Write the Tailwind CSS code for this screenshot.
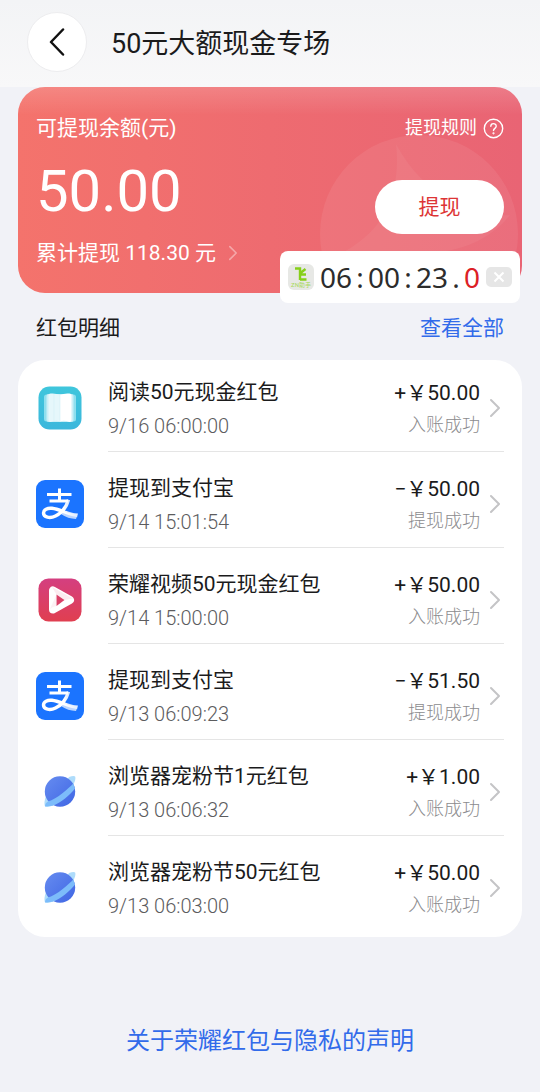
<!DOCTYPE html>
<html lang="zh-CN">
<head>
<meta charset="utf-8">
<meta name="viewport" content="width=device-width, initial-scale=1">
<title>50元大额现金专场</title>
<script src="https://cdn.jsdelivr.net/npm/@tailwindcss/browser@4"></script>
</head>
<body class="min-h-screen bg-[#f1f2f7] font-['Roboto','Noto_Sans_CJK_SC',sans-serif] text-[21px] leading-[30px] text-[#1b1b1c]">

<svg class="absolute size-0" aria-hidden="true">
  <defs>
    <linearGradient id="g-read" x1="0" y1="0" x2="0" y2="1"><stop offset="0" stop-color="#3fc6dc"/><stop offset="1" stop-color="#3bb7dc"/></linearGradient>
    <linearGradient id="g-video" x1="0" y1="0" x2="0" y2="1"><stop offset="0" stop-color="#d43f80"/><stop offset="1" stop-color="#e03f50"/></linearGradient>
    <linearGradient id="g-planet" x1="0" y1="0" x2="1" y2="1"><stop offset="0" stop-color="#668cf0"/><stop offset="1" stop-color="#3f66e4"/></linearGradient>
    <linearGradient id="g-tail" x1="0" y1="0" x2="1" y2="0"><stop offset="0.6" stop-color="#fff"/><stop offset="1" stop-color="#fff" stop-opacity="0.55"/></linearGradient>
    <symbol id="i-read" viewBox="0 0 48 48">
      <rect x="2.500" y="2.500" width="43" height="43" rx="11" fill="url(#g-read)"/>
      <rect x="8" y="10.500" width="32" height="27" rx="2.500" fill="#8fdfee"/>
      <rect x="10.500" y="10" width="27" height="28" rx="2" fill="#c9eff7"/>
      <path d="M12.500 11.500Q12.500 9.500 14.500 9.500Q20 9 24 11V37.500Q20 36 14.500 38Q12.500 38 12.500 36Z" fill="#e6f7fb"/>
      <path d="M24 11Q28 9 33.500 9.500Q35.500 9.500 35.500 11.500V36Q35.500 38 33.500 38Q28 36 24 37.500Z" fill="#fff"/>
      <path d="M24 11V37.500M18 10V37" stroke="#d4f0f7" stroke-width="0.600" fill="none"/>
    </symbol>
    <symbol id="i-pay" viewBox="0 0 48 48">
      <rect width="48" height="48" rx="9" fill="#1b74ff"/>
      <path d="M11 14.500H35.500M23.500 8.500V20.500M13.500 21H32" stroke="#fff" stroke-width="3" fill="none"/>
      <path d="M32.500 19.700C30.500 27 25.500 33 19.500 36C14 38.700 7.500 37.500 7.500 33C7.500 29.500 11.500 27.800 16 28.300C24 29.200 31 34 41.500 35.500" stroke="url(#g-tail)" stroke-width="3.400" fill="none"/>
      <path d="M24 30.500Q32 33.500 42 33.500L40 39Q32 38.800 25 34Z" fill="#fff" fill-opacity="0.700"/>
    </symbol>
    <symbol id="i-video" viewBox="0 0 48 48">
      <rect x="2.500" y="2.500" width="43" height="43" rx="10" fill="url(#g-video)"/>
      <path d="M17 14.500V33.500L34 24Z" fill="#fff" stroke="#fff" stroke-width="8" stroke-linejoin="round"/>
      <path d="M20.500 18.500V30L28.500 24Z" fill="#da4068"/>
      <path d="M16 11L37 22.500L28.500 24L20.500 18.500Z" fill="#f5c6d4" fill-opacity="0.350"/>
      <path d="M13.500 34Q15 31 20.500 30V18.500Z" fill="#f5c6d4" fill-opacity="0.250"/>
    </symbol>
    <symbol id="i-planet" viewBox="0 0 48 48">
      <path d="M33 9Q38.500 7 39.300 8.800Q40 12 37 17L30 14ZM10 28Q7.800 34 8.800 38Q11 40 17 37.500L16 32Z" fill="#aedcfb"/>
      <circle cx="24" cy="23.500" r="15.200" fill="url(#g-planet)"/>
      <path d="M12 33.500C21 31 33 20 37.300 15.500L39 20.500C34 27 25 35 16.500 37.800L9 38.600Q9 35 12 33.500Z" fill="#7cbcfa"/>
    </symbol>
    <symbol id="i-next" viewBox="0 0 12 20"><path d="M2 2L10 10L2 18" fill="none" stroke="currentColor" stroke-width="2" stroke-linecap="round" stroke-linejoin="round"/></symbol>
  </defs>
</svg>

<header class="flex h-[87px] items-center gap-6 bg-linear-to-b from-[#f3f4f6] to-[#f8f8f9] pb-[3px] pl-[27px]">
  <button type="button" aria-label="返回" class="grid size-[60px] place-items-center rounded-full border border-[#ededef] bg-white">
    <svg class="size-7" viewBox="0 0 28 28" fill="none" stroke="#111" stroke-width="2.500" stroke-linecap="round" stroke-linejoin="round"><path d="M20 1.500L8 14L20 26.500"/></svg>
  </button>
  <h1 class="pt-1 text-[27px] leading-9">50元大额现金专场</h1>
</header>

<main class="px-[18px]">
  <section class="relative">
    <div class="relative flex h-[206px] justify-between overflow-hidden rounded-[27px] bg-linear-to-r from-[#f4736c] via-[#ee6b70] to-[#e96474] px-[18px] text-white">
      <svg class="absolute right-0 bottom-0 h-[206px] w-[252px]" viewBox="0 0 252 206" aria-hidden="true">
        <circle cx="149" cy="147" r="99" fill="#fff" fill-opacity="0.070"/>
        <path d="M126 57Q148 98 182 112Q212 130 240 128Q215 160 165 166H72Q105 148 118 120Q130 90 126 57Z" fill="#fff" fill-opacity="0.050"/>
      </svg>
      <div class="absolute inset-x-0 top-0 h-7 bg-linear-to-b from-white/15 to-transparent"></div>
      <div class="relative flex flex-col pt-[26px]">
        <p>可提现余额(元)</p>
        <p class="mt-3 text-[58px] leading-[72px]">50.00</p>
        <a href="#total" class="mt-[11px] flex items-center gap-3 whitespace-nowrap">累计提现 118.30 元
          <svg class="h-4 w-[10px] text-white/40"><use href="#i-next"/></svg>
        </a>
      </div>
      <div class="relative flex flex-col items-end pt-[26px]">
        <a href="#rules" class="flex items-center gap-[6px] text-lg leading-[30px]">提现规则
          <svg class="size-[21px]" viewBox="0 0 21 21" fill="none" stroke="#fff" stroke-width="1.400" stroke-linecap="round"><circle cx="10.500" cy="10.500" r="9.200"/><path d="M7.800 8.300C7.800 4.800 13.200 4.800 13.200 8.200C13.200 10.300 10.500 10.400 10.500 12.600"/><circle cx="10.500" cy="15.300" r="0.400" fill="#fff"/></svg>
        </a>
        <button type="button" class="mt-[37px] h-[54px] w-[129px] rounded-full bg-white text-[#dd3535]">提现</button>
      </div>
    </div>

    <!-- floating clock -->
    <div class="absolute top-[164px] right-[2px] flex h-[52px] w-[240px] items-center justify-between rounded-lg bg-white px-2">
      <svg class="size-[26px]" viewBox="0 0 26 26" aria-hidden="true"><rect width="26" height="26" rx="6" fill="#e7e8e5"/><path d="M7 4.500H12V16M12.500 9L17.500 5M12 10.500H18M12 15.500H18.500" fill="none" stroke="#86cf19" stroke-width="2.400"/><text x="13" y="23" text-anchor="middle" font-size="6" fill="#a9d860">ZN助手</text></svg>
      <time class="flex font-['Noto_Sans',sans-serif] text-[28px] leading-9 text-[#2c2c2c]"><span>06</span><span class="w-4 text-center">:</span><span>00</span><span class="w-4 text-center">:</span><span>23</span><span class="w-4 text-center">.</span><span class="text-[#dc2025]">0</span></time>
      <button type="button" aria-label="关闭" class="grid h-5 w-[26px] place-items-center rounded-[5px] bg-[#e6e6e6]">
        <svg class="size-3" viewBox="0 0 12 12" fill="none" stroke="#fff" stroke-width="2"><path d="M1.500 1.500L10.500 10.500M10.500 1.500L1.500 10.500"/></svg>
      </button>
    </div>
  </section>

  <div class="flex items-center justify-between px-[18px] pt-5 pb-[17px]">
    <h2>红包明细</h2>
    <a href="#all" class="text-[#326bea]">查看全部</a>
  </div>

  <ul class="rounded-[27px] bg-white px-[18px] pt-[18px] pb-[18px]">
    <li class="flex gap-6">
      <svg class="mt-[6px] size-12 shrink-0"><use href="#i-read"/></svg>
      <div class="flex flex-1 items-start justify-between border-b border-[#e5e5e5] pb-3">
        <div><h3 class="leading-[28px]">阅读50元现金红包</h3><p class="pt-[7px] text-[20px] leading-[26px] font-light text-[#5c5c5e]">9/16 06:00:00</p></div>
        <div class="flex items-center gap-[9px]"><div class="text-right"><p>+￥50.00</p><p class="pt-1 text-lg leading-[26px] font-light text-[#8c8c8e]">入账成功</p></div><svg class="mr-[3px] h-5 w-3 text-[#c4c4c6]"><use href="#i-next"/></svg></div>
      </div>
    </li>
    <li class="flex gap-6 pt-[22px]">
      <svg class="mt-[6px] size-12 shrink-0"><use href="#i-pay"/></svg>
      <div class="flex flex-1 items-start justify-between border-b border-[#e5e5e5] pb-3">
        <div><h3 class="leading-[28px]">提现到支付宝</h3><p class="pt-[7px] text-[20px] leading-[26px] font-light text-[#5c5c5e]">9/14 15:01:54</p></div>
        <div class="flex items-center gap-[9px]"><div class="text-right"><p>−￥50.00</p><p class="pt-1 text-lg leading-[26px] font-light text-[#8c8c8e]">提现成功</p></div><svg class="mr-[3px] h-5 w-3 text-[#c4c4c6]"><use href="#i-next"/></svg></div>
      </div>
    </li>
    <li class="flex gap-6 pt-[22px]">
      <svg class="mt-[6px] size-12 shrink-0"><use href="#i-video"/></svg>
      <div class="flex flex-1 items-start justify-between border-b border-[#e5e5e5] pb-3">
        <div><h3 class="leading-[28px]">荣耀视频50元现金红包</h3><p class="pt-[7px] text-[20px] leading-[26px] font-light text-[#5c5c5e]">9/14 15:00:00</p></div>
        <div class="flex items-center gap-[9px]"><div class="text-right"><p>+￥50.00</p><p class="pt-1 text-lg leading-[26px] font-light text-[#8c8c8e]">入账成功</p></div><svg class="mr-[3px] h-5 w-3 text-[#c4c4c6]"><use href="#i-next"/></svg></div>
      </div>
    </li>
    <li class="flex gap-6 pt-[22px]">
      <svg class="mt-[6px] size-12 shrink-0"><use href="#i-pay"/></svg>
      <div class="flex flex-1 items-start justify-between border-b border-[#e5e5e5] pb-3">
        <div><h3 class="leading-[28px]">提现到支付宝</h3><p class="pt-[7px] text-[20px] leading-[26px] font-light text-[#5c5c5e]">9/13 06:09:23</p></div>
        <div class="flex items-center gap-[9px]"><div class="text-right"><p>−￥51.50</p><p class="pt-1 text-lg leading-[26px] font-light text-[#8c8c8e]">提现成功</p></div><svg class="mr-[3px] h-5 w-3 text-[#c4c4c6]"><use href="#i-next"/></svg></div>
      </div>
    </li>
    <li class="flex gap-6 pt-[22px]">
      <svg class="mt-[6px] size-12 shrink-0"><use href="#i-planet"/></svg>
      <div class="flex flex-1 items-start justify-between border-b border-[#e5e5e5] pb-3">
        <div><h3 class="leading-[28px]">浏览器宠粉节1元红包</h3><p class="pt-[7px] text-[20px] leading-[26px] font-light text-[#5c5c5e]">9/13 06:06:32</p></div>
        <div class="flex items-center gap-[9px]"><div class="text-right"><p>+￥1.00</p><p class="pt-1 text-lg leading-[26px] font-light text-[#8c8c8e]">入账成功</p></div><svg class="mr-[3px] h-5 w-3 text-[#c4c4c6]"><use href="#i-next"/></svg></div>
      </div>
    </li>
    <li class="flex gap-6 pt-[22px]">
      <svg class="mt-[6px] size-12 shrink-0"><use href="#i-planet"/></svg>
      <div class="flex flex-1 items-start justify-between">
        <div><h3 class="leading-[28px]">浏览器宠粉节50元红包</h3><p class="pt-[7px] text-[20px] leading-[26px] font-light text-[#5c5c5e]">9/13 06:03:00</p></div>
        <div class="flex items-center gap-[9px]"><div class="text-right"><p>+￥50.00</p><p class="pt-1 text-lg leading-[26px] font-light text-[#8c8c8e]">入账成功</p></div><svg class="mr-[3px] h-5 w-3 text-[#c4c4c6]"><use href="#i-next"/></svg></div>
      </div>
    </li>
  </ul>
</main>

<footer class="pt-[86px] pb-8 text-center text-2xl leading-9">
  <a href="#privacy" class="text-[#326bea]">关于荣耀红包与隐私的声明</a>
</footer>
</body>
</html>
